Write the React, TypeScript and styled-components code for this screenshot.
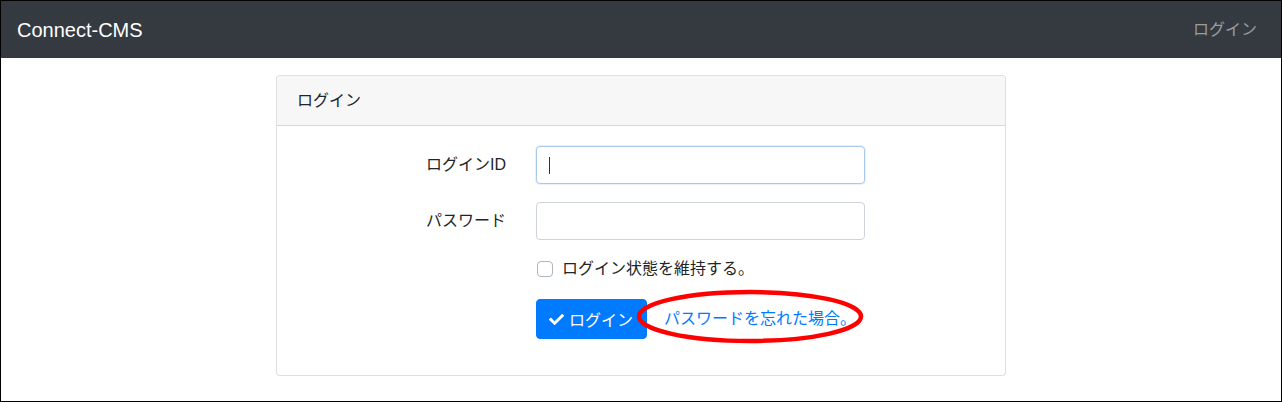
import React from 'react';
import styled, { createGlobalStyle } from 'styled-components';
import { FaCheck } from 'react-icons/fa';

const GlobalStyle = createGlobalStyle`
  html, body {
    margin: 0;
    padding: 0;
    background: #fff;
  }
  body {
    font-family: "Liberation Sans", Arial, "Noto Sans CJK JP", sans-serif;
    font-size: 16px;
    line-height: 1.5;
    color: #212529;
  }
  * {
    box-sizing: border-box;
  }
`;

const Frame = styled.div`
  min-height: 100vh;
  border: 1px solid #000;
  display: flex;
  flex-direction: column;
`;

const Navbar = styled.nav`
  height: 57px;
  background: #343a40;
  display: flex;
  align-items: center;
  justify-content: space-between;
  padding: 0 24px 0 16px;
`;

const Brand = styled.a`
  color: #fff;
  font-size: 20px;
  line-height: 30px;
  text-decoration: none;
`;

const NavLink = styled.a`
  color: rgba(255, 255, 255, 0.5);
  font-size: 16px;
  text-decoration: none;
`;

const Container = styled.main`
  display: flex;
  justify-content: center;
  padding-top: 17px;
`;

const Card = styled.section`
  width: 730px;
  border: 1px solid rgba(0, 0, 0, 0.125);
  border-radius: 4px;
  background: #fff;
`;

const CardHeader = styled.div`
  height: 50px;
  padding: 0 20px;
  display: flex;
  align-items: center;
  background: #f7f7f7;
  border-bottom: 1px solid rgba(0, 0, 0, 0.125);
  border-radius: 3px 3px 0 0;
`;

const CardBody = styled.form`
  padding: 20px 20px 20px;
  display: flex;
  flex-direction: column;
`;

const Row = styled.div<{ $mb?: number }>`
  display: grid;
  grid-template-columns: 239px 359px;
  margin: 0 -15px ${(p) => p.$mb ?? 16}px;
`;

const Label = styled.label`
  padding: 0 15px;
  text-align: right;
  display: flex;
  align-items: center;
  justify-content: flex-end;
  height: 38px;
`;

const Field = styled.div<{ $caret?: boolean }>`
  grid-column: 2;
  padding: 0 15px;
  position: relative;
  display: flex;
  align-items: center;

  &::after {
    content: '';
    display: ${(p) => (p.$caret ? 'block' : 'none')};
    position: absolute;
    left: 28px;
    top: 11px;
    width: 1px;
    height: 17px;
    background: #333;
  }
`;

const Input = styled.input<{ $focused?: boolean }>`
  width: 100%;
  height: 38px;
  padding: 6px 12px;
  font-size: 16px;
  border: 1px solid ${(p) => (p.$focused ? '#a9c9ec' : '#ced4da')};
  box-shadow: ${(p) => (p.$focused ? '0 0 0 1px rgba(0, 123, 255, 0.1)' : 'none')};
  border-radius: 4px;
  outline: none;
  background: #fff;
`;

const CheckLine = styled.label`
  display: flex;
  align-items: center;
  height: 26px;
  padding-left: 1px;
`;

const CheckBox = styled.span`
  width: 16px;
  height: 16px;
  border: 1px solid #adb5bd;
  border-radius: 4px;
  background: #fff;
  margin-right: 9px;
  flex-shrink: 0;
`;

const Button = styled.button`
  display: inline-flex;
  align-items: center;
  gap: 5px;
  height: 40px;
  padding: 0 13px 0 12px;
  font-family: inherit;
  font-size: 16px;
  color: #fff;
  background: #007bff;
  border: 1px solid #007bff;
  border-radius: 4px;
  white-space: nowrap;

  svg {
    width: 15px;
    height: 15px;
  }
`;

const LinkWrap = styled.span`
  position: relative;
  display: inline-flex;
  align-items: center;
  height: 40px;
  margin-left: 5px;
  padding: 0 12px;
`;

const ForgotLink = styled.a`
  color: #007bff;
  text-decoration: none;
  white-space: nowrap;
`;

const Circle = styled.svg`
  position: absolute;
  left: -15px;
  top: -9px;
  width: 226px;
  height: 53px;
  pointer-events: none;
  overflow: visible;
`;

export default function App() {
  return (
    <>
      <GlobalStyle />
      <Frame>
        <Navbar>
          <Brand href="#">Connect-CMS</Brand>
          <NavLink href="#">ログイン</NavLink>
        </Navbar>
        <Container>
          <Card>
            <CardHeader>ログイン</CardHeader>
            <CardBody onSubmit={(e) => e.preventDefault()}>
              <Row $mb={18}>
                <Label>ログインID</Label>
                <Field $caret>
                  <Input $focused type="text" />
                </Field>
              </Row>
              <Row $mb={16}>
                <Label>パスワード</Label>
                <Field>
                  <Input type="password" />
                </Field>
              </Row>
              <Row $mb={17}>
                <Field>
                  <CheckLine>
                    <CheckBox />
                    ログイン状態を維持する。
                  </CheckLine>
                </Field>
              </Row>
              <Row $mb={16}>
                <Field>
                  <Button type="submit">
                    <FaCheck />
                    ログイン
                  </Button>
                  <LinkWrap>
                    <ForgotLink href="#">パスワードを忘れた場合。</ForgotLink>
                    <Circle viewBox="0 0 226 53">
                      <ellipse cx="113" cy="26.5" rx="111" ry="24.5" fill="none" stroke="#f00" strokeWidth="4.5" />
                    </Circle>
                  </LinkWrap>
                </Field>
              </Row>
            </CardBody>
          </Card>
        </Container>
      </Frame>
    </>
  );
}
